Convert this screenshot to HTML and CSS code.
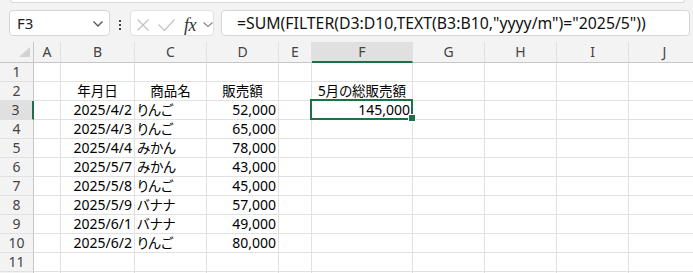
FILE: index.html
```html
<!DOCTYPE html>
<html lang="ja">
<head>
    <meta charset="UTF-8">
    <title>Book1 - Excel</title>
    <link rel="stylesheet" href="styles.css">
</head>
<body>
    <div class="ribbon-edge"></div>

    <div class="formula-bar">
        <div class="name-box">
            <span>F3</span>
            <svg class="chevron" width="10" height="6" viewBox="0 0 10 6"><polyline points="0.5,0.5 5,5 9.5,0.5" fill="none" stroke="#555" stroke-width="1.3"/></svg>
        </div>
        <div class="grip">
            <span></span><span></span><span></span>
        </div>
        <div class="fx-buttons">
            <svg class="icon-cancel" width="12" height="12" viewBox="0 0 12 12"><path d="M0.5 0.5 L11.5 11.5 M11.5 0.5 L0.5 11.5" stroke="#c2c2c2" stroke-width="1.2"/></svg>
            <svg class="icon-enter" width="17" height="12" viewBox="0 0 17 12"><polyline points="0.5,5.5 6.5,11.5 16.5,0.5" fill="none" stroke="#c2c2c2" stroke-width="1.2"/></svg>
            <span class="fx">fx</span>
            <svg class="icon-more" width="10" height="5" viewBox="0 0 10 5"><polyline points="0.5,0.5 5,4.5 9.5,0.5" fill="none" stroke="#8a8a8a" stroke-width="1.2"/></svg>
        </div>
        <div class="formula-input">=SUM(FILTER(D3:D10,TEXT(B3:B10,"yyyy/m")="2025/5"))</div>
    </div>

    <div class="sheet">
        <!-- column headers -->
        <div class="corner"><svg width="11" height="10" viewBox="0 0 11 10"><polygon points="11,0 11,10 0,10" fill="#d3d3d3"/></svg></div>
        <div class="col-head">A</div>
        <div class="col-head">B</div>
        <div class="col-head">C</div>
        <div class="col-head">D</div>
        <div class="col-head">E</div>
        <div class="col-head selected">F</div>
        <div class="col-head">G</div>
        <div class="col-head">H</div>
        <div class="col-head">I</div>
        <div class="col-head">J</div>

        <!-- row 1 -->
        <div class="row-head">1</div>
        <div class="cell"></div><div class="cell"></div><div class="cell"></div><div class="cell"></div><div class="cell"></div>
        <div class="cell"></div><div class="cell"></div><div class="cell"></div><div class="cell"></div><div class="cell"></div>

        <!-- row 2 -->
        <div class="row-head">2</div>
        <div class="cell"></div>
        <div class="cell center jp">年月日</div>
        <div class="cell center jp">商品名</div>
        <div class="cell center jp">販売額</div>
        <div class="cell"></div>
        <div class="cell center jp">5月の総販売額</div>
        <div class="cell"></div><div class="cell"></div><div class="cell"></div><div class="cell"></div>

        <!-- row 3 -->
        <div class="row-head selected">3</div>
        <div class="cell"></div>
        <div class="cell num">2025/4/2</div>
        <div class="cell jp">りんご</div>
        <div class="cell num">52,000</div>
        <div class="cell"></div>
        <div class="cell num active">145,000<span class="fill-handle"></span></div>
        <div class="cell"></div><div class="cell"></div><div class="cell"></div><div class="cell"></div>

        <!-- row 4 -->
        <div class="row-head">4</div>
        <div class="cell"></div>
        <div class="cell num">2025/4/3</div>
        <div class="cell jp">りんご</div>
        <div class="cell num">65,000</div>
        <div class="cell"></div><div class="cell"></div><div class="cell"></div><div class="cell"></div><div class="cell"></div><div class="cell"></div>

        <!-- row 5 -->
        <div class="row-head">5</div>
        <div class="cell"></div>
        <div class="cell num">2025/4/4</div>
        <div class="cell jp">みかん</div>
        <div class="cell num">78,000</div>
        <div class="cell"></div><div class="cell"></div><div class="cell"></div><div class="cell"></div><div class="cell"></div><div class="cell"></div>

        <!-- row 6 -->
        <div class="row-head">6</div>
        <div class="cell"></div>
        <div class="cell num">2025/5/7</div>
        <div class="cell jp">みかん</div>
        <div class="cell num">43,000</div>
        <div class="cell"></div><div class="cell"></div><div class="cell"></div><div class="cell"></div><div class="cell"></div><div class="cell"></div>

        <!-- row 7 -->
        <div class="row-head">7</div>
        <div class="cell"></div>
        <div class="cell num">2025/5/8</div>
        <div class="cell jp">りんご</div>
        <div class="cell num">45,000</div>
        <div class="cell"></div><div class="cell"></div><div class="cell"></div><div class="cell"></div><div class="cell"></div><div class="cell"></div>

        <!-- row 8 -->
        <div class="row-head">8</div>
        <div class="cell"></div>
        <div class="cell num">2025/5/9</div>
        <div class="cell jp">バナナ</div>
        <div class="cell num">57,000</div>
        <div class="cell"></div><div class="cell"></div><div class="cell"></div><div class="cell"></div><div class="cell"></div><div class="cell"></div>

        <!-- row 9 -->
        <div class="row-head">9</div>
        <div class="cell"></div>
        <div class="cell num">2025/6/1</div>
        <div class="cell jp">バナナ</div>
        <div class="cell num">49,000</div>
        <div class="cell"></div><div class="cell"></div><div class="cell"></div><div class="cell"></div><div class="cell"></div><div class="cell"></div>

        <!-- row 10 -->
        <div class="row-head">10</div>
        <div class="cell"></div>
        <div class="cell num">2025/6/2</div>
        <div class="cell jp">りんご</div>
        <div class="cell num">80,000</div>
        <div class="cell"></div><div class="cell"></div><div class="cell"></div><div class="cell"></div><div class="cell"></div><div class="cell"></div>

        <!-- row 11 -->
        <div class="row-head">11</div>
        <div class="cell"></div><div class="cell"></div><div class="cell"></div><div class="cell"></div><div class="cell"></div>
        <div class="cell"></div><div class="cell"></div><div class="cell"></div><div class="cell"></div><div class="cell"></div>

        <!-- row 12, only its top edge shows -->
        <div class="row-head"></div>
        <div class="cell"></div><div class="cell"></div><div class="cell"></div><div class="cell"></div><div class="cell"></div>
        <div class="cell"></div><div class="cell"></div><div class="cell"></div><div class="cell"></div><div class="cell"></div>
    </div>
</body>
</html>
```

FILE: styles.css
```css
body {
    margin: 0;
    background-color: #f3f3f3;
    font-family: "Noto Sans", "Noto Sans CJK JP", sans-serif;
    overflow: hidden;
    height: 273px;
}

.ribbon-edge {
    height: 2px;
    margin: 0 8px 0 10px;
    background-color: #fff;
    border: 1px solid #d8d8d8;
    border-top: none;
    border-radius: 0 0 6px 6px;
}

/* formula bar */

.formula-bar {
    display: flex;
    height: 26px;
    margin: 7px 3px 0 9px;
}

.name-box {
    width: 101px;
    box-sizing: border-box;
    display: flex;
    align-items: center;
    justify-content: space-between;
    padding: 0 6px 0 7px;
    background-color: #fff;
    border: 1px solid #d6d6d6;
    border-radius: 4px;
    font-size: 15px;
    color: #222;
}

.name-box .chevron {
    margin-top: 2px;
}

.grip {
    width: 20px;
    display: flex;
    flex-direction: column;
    align-items: center;
    justify-content: center;
    gap: 2px;
    padding-top: 3px;
    box-sizing: border-box;
}

.grip span {
    width: 2px;
    height: 2px;
    background-color: #444;
}

.fx-buttons {
    width: 84px;
    box-sizing: border-box;
    display: flex;
    align-items: center;
    padding: 3px 0 0 6px;
    background-color: #fff;
    border: 1px solid #e0e0e0;
    border-radius: 4px;
}

.icon-enter {
    margin-left: 9px;
}

.fx {
    margin-left: 9px;
    width: 15px;
    font-family: "Liberation Serif", serif;
    font-style: italic;
    font-size: 18px;
    line-height: 18px;
    color: #333;
    letter-spacing: -0.5px;
}

.icon-more {
    margin-left: 4px;
}

.formula-input {
    flex: 1;
    margin-left: 7px;
    padding-left: 15px;
    display: flex;
    align-items: center;
    background-color: #fff;
    border: 1px solid #d6d6d6;
    border-radius: 4px;
    font-size: 15.8px;
    color: #111;
    white-space: nowrap;
}

/* sheet grid */

.sheet {
    display: grid;
    grid-template-columns: 34px 27px 74px 72px 72px 33px 101px 72px 72px 72px 72px;
    grid-template-rows: 21px repeat(12, 19px);
    margin-top: 6px;
    width: 701px;
    font-size: 14px;
    line-height: 18px;
    font-feature-settings: "palt";
}

.sheet > div {
    box-sizing: border-box;
    border-right: 1px solid #e1e1e1;
    border-bottom: 1px solid #e1e1e1;
    white-space: nowrap;
}

.corner {
    display: flex;
    align-items: flex-end;
    justify-content: flex-end;
    padding: 0 3px 5px 0;
    background-color: #f3f3f3;
}

.sheet > .corner,
.sheet > .col-head {
    border-bottom-color: #c6c6c6;
}

.sheet > .corner,
.sheet > .row-head {
    border-right-color: #c6c6c6;
}

.col-head {
    background-color: #f3f3f3;
    text-align: center;
    line-height: 20px;
    color: #444;
}

.row-head {
    background-color: #f3f3f3;
    text-align: center;
    color: #444;
}

.sheet > .col-head.selected {
    background-color: #e0e0e0;
    border-bottom: 2px solid #1e7145;
    line-height: 19px;
}

.sheet > .row-head.selected {
    background-color: #e0e0e0;
    border-right: 2px solid #1e7145;
    padding-right: 1px;
}

.cell {
    background-color: #fff;
    padding: 0 2px;
    color: #000;
}

.cell.jp {
    font-size: 13.5px;
}

.cell.num {
    text-align: right;
}

.cell.center {
    text-align: center;
}

.cell.active {
    position: relative;
}

/* selection outline and fill handle sit over the grid lines */
.cell.active::after {
    content: "";
    position: absolute;
    top: -2px;
    left: -2px;
    right: -1px;
    bottom: -1px;
    border: 2px solid #1e7145;
}

.fill-handle {
    position: absolute;
    right: -4px;
    bottom: -3px;
    width: 6px;
    height: 6px;
    background-color: #1e7145;
    border: 1px solid #fff;
    z-index: 1;
}
```
